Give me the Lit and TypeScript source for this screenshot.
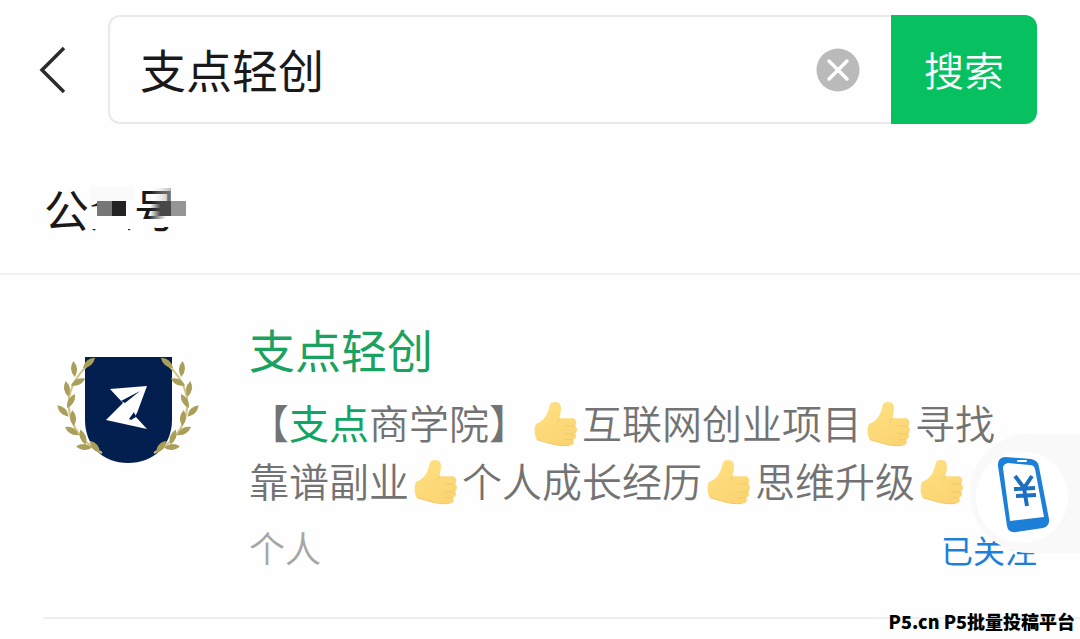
import { LitElement, html, css, svg } from "lit";
import { customElement, state } from "lit/decorators.js";

/* centre x, centre y, rotation */
const LEAVES = [
  [31, 8, -40], [16, 14, 85], [20, 27, -25], [9, 34, 80], [13, 46, -60], [5, 56, 45],
  [15, 63, 85], [14, 76, 30], [25, 82, 70], [26, 92, 5], [37, 92, 50],
];

@customElement("thumb-up")
export class ThumbUp extends LitElement {
  static styles = css`
    :host { display: inline-block; width: 43px; height: 46px; margin: 0 5px; vertical-align: -8px; }
    svg { display: block; width: 100%; height: 100%; }
  `;
  render() {
    return html`<svg viewBox="0 0 44 46" role="img" aria-label="👍">
      <defs>
        <linearGradient id="g" x1="0" y1="0" x2=".5" y2="1">
          <stop offset="0" stop-color="#ffe182" /><stop offset="1" stop-color="#fbd573" />
        </linearGradient>
      </defs>
      <path fill="url(#g)" d="M16 4C17 0 21 0 25 1C28 3 28 8 27 12L26 17H40C44 18 44 23 42 25C45 27 44 31 42 33C44 35 43 38 40 39C42 42 40 45 36 45C28 46 19 44 13 42L3 39C0 35 0 27 2 23C10 20 14 14 16 4Z" />
      <path fill="none" stroke="#f3c86c" stroke-width="1" stroke-linecap="round" d="M41 25H32M41 33H32M39 39H32M26 17L24 21" />
      <path fill="none" stroke="#f3c56a" stroke-width="1" d="M3 39L13 42C20 44 28 46 36 45" />
    </svg>`;
  }
}

@customElement("account-crest")
export class AccountCrest extends LitElement {
  static styles = css`
    :host { display: block; }
    svg { display: block; width: 140px; height: 110px; overflow: visible; }
  `;
  branch() {
    return svg`<path d="M34 6C22 17 14 27 11 43C9 61 17 84 44 98" fill="none" stroke="#d3c583" stroke-width="2" />
      ${LEAVES.map(([x, y, a]) => svg`<path
        transform="translate(${x} ${y}) rotate(${a})"
        d="M-8 0Q0 -6 8 0Q0 6 -8 0Z" fill="#a99f5b" />`)}`;
  }
  render() {
    return html`<svg viewBox="0 0 140 110" role="img" aria-label="支点轻创">
      <path d="M27 2H114V65C114 91 95 108 70 108S27 91 27 65Z" fill="#031f4f" />
      <g>${this.branch()}</g>
      <g transform="translate(140 0) scale(-1 1)">${this.branch()}</g>
      <path fill="#fff" d="M52 34L89 31L79 58L77 61L89 74L48 65L65 48Z" />
      <path fill="#031f4f" d="M63 46L82 36L67 48ZM71 64L76 57L78 62L73 65Z" />
    </svg>`;
  }
}

@customElement("app-root")
export class AppRoot extends LitElement {
  @state() query = "支点轻创";

  static styles = css`
    :host {
      display: block;
      position: relative;
      min-height: 100vh;
      overflow: hidden;
      background: #fefefe;
      color: #191919;
      font-family: "Noto Sans CJK SC", sans-serif;
      font-weight: 400;
    }
    * { box-sizing: border-box; }
    button, input { font: inherit; color: inherit; border: 0; padding: 0; margin: 0; background: none; }
    h2, h3, p { margin: 0; font-weight: inherit; }
    a { text-decoration: none; color: inherit; }
    .bar { display: flex; align-items: center; padding: 15px 43px 0 39px; }
    .back { width: 28px; margin-right: 41px; }
    .back svg, .clear svg { display: block; }
    .search {
      display: flex; flex: 1; min-width: 0; height: 109px; align-items: center;
      border: 2px solid #e9e9e9; border-right: 0; border-radius: 12px 0 0 12px;
      padding: 0 31px 0 30px;
    }
    .field { flex: 1; min-width: 0; height: 72px; padding-bottom: 4px; font-size: 46px; outline: 0; }
    .clear { flex: none; }
    .go {
      height: 109px; width: 146px; border-radius: 0 12px 12px 0; padding-bottom: 2px;
      background: #07c160; color: #fff; font-size: 40px; font-weight: 350;
    }
    .section {
      display: flex; padding: 53px 44px 32px; border-bottom: 2px solid #f1f1f1;
      font-size: 45px; line-height: 64px;
    }
    .masked { position: relative; }
    .mosaic { position: absolute; left: 44px; top: 10px; width: 106px; height: 52px; }
    .item { display: grid; grid-template-columns: 206px 1fr; margin-left: 43px; padding: 41px 43px 44px 0; border-bottom: 2px solid #efefef; }
    .crest { padding: 39px 0 0 15px; }
    .name { font-size: 46px; line-height: 64px; color: #1aa260; }
    .desc { font-size: 40px; line-height: 58px; margin-top: 13px; color: #737373; font-weight: 350; width: 756px; max-width: 100%; }
    .hit { color: #10a562; font-weight: 400; }
    .meta { display: flex; justify-content: space-between; align-items: center; margin-top: 12px; font-size: 36px; line-height: 52px; color: #a6a6a6; font-weight: 350; }
    .followed { font-size: 32px; color: #1d80d8; font-weight: 400; padding-top: 4px; line-height: 48px; }
    .float {
      position: absolute; right: 0; top: 434px; width: 110px; height: 119px;
      border-radius: 60px 0 0 60px; background: #f9f9f9;
    }
    .float svg { display: block; }
    .mark { position: absolute; right: 5px; top: 608px; font-size: 18px; line-height: 26px; font-weight: 900; color: #000; }
  `;

  render() {
    return html`
      <header class="bar">
        <button class="back" aria-label="返回">
          <svg width="28" height="50" viewBox="0 0 28 50"><path d="M25 3L3 25L25 47" fill="none" stroke="#2b2b2b" stroke-width="3.5" /></svg>
        </button>
        <div class="search">
          <input class="field" aria-label="搜索" .value=${this.query}
            @input=${(e: Event) => (this.query = (e.target as HTMLInputElement).value)} />
          <button class="clear" aria-label="清除" @click=${() => (this.query = "")}>
            <svg width="44" height="44" viewBox="0 0 44 44">
              <circle cx="22" cy="22" r="21.5" fill="#bababa" />
              <path d="M13 13L31 31M31 13L13 31" stroke="#fff" stroke-width="3.5" stroke-linecap="round" />
            </svg>
          </button>
        </div>
        <button class="go">搜索</button>
      </header>
      <main>
        <h2 class="section"><span class="masked">公众号
          <svg class="mosaic" viewBox="0 0 106 52" aria-hidden="true">
            <defs>
              <linearGradient id="fade"><stop offset="0" stop-color="#fff" stop-opacity="0" /><stop offset="1" stop-color="#999" stop-opacity=".7" /></linearGradient>
              <linearGradient id="dark"><stop offset="0" stop-color="#444" stop-opacity="0" /><stop offset=".5" stop-color="#484848" /></linearGradient>
              <linearGradient id="pale"><stop offset="0" stop-color="#fefefe" stop-opacity="0" /><stop offset=".5" stop-color="#fefefe" /></linearGradient>
            </defs>
            <path d="M2 0H46V14H12L2 16Z" fill="#fafafa" />
            <path d="M9 29H46V42H40V52H9V42H2V20L9 19Z" fill="#fefefe" />
            <path d="M9 14H24V29H9Z" fill="#777" /><path d="M24 14H38V29H24Z" fill="#222" />
            <path d="M38 14H46V42H38Z" fill="#fefefe" />
            <path d="M62 1H83V14H62Z" fill="url(#fade)" />
            <path d="M83 0H106V14H83Z" fill="#fefefe" />
            <path d="M62 14H83V29H62Z" fill="url(#dark)" />
            <path d="M83 14H98V29H83Z" fill="#959595" />
            <path d="M60 29H96V40H60Z" fill="url(#pale)" />
          </svg></span>
        </h2>
        <article class="item">
          <div class="crest"><account-crest></account-crest></div>
          <div>
            <h3 class="name"><a href="#">支点轻创</a></h3>
            <p class="desc">【<span class="hit">支点</span>商学院】<thumb-up></thumb-up>互联网创业项目<thumb-up></thumb-up>寻找靠谱副业<thumb-up></thumb-up>个人成长经历<thumb-up></thumb-up>思维升级<thumb-up></thumb-up></p>
            <div class="meta"><span>个人</span><span class="followed">已关注</span></div>
          </div>
        </article>
      </main>
      <button class="float" aria-label="收益">
        <svg width="110" height="119" viewBox="0 0 110 119">
          <circle cx="52" cy="63" r="46" fill="#fff" />
          <path fill="#1d80d8" d="M35 23L61 25Q68 26 69 33L79 85Q80 92 73 94L46 98Q38 99 37 92L28 32Q27 24 35 23Z" />
          <path fill="#fff" d="M38 29L60 31Q64 31 65 35L74 83L40 87L33 34Q33 30 38 29Z" />
          <path d="M48 27L56 27" stroke="#fff" stroke-width="2" stroke-linecap="round" />
          <path d="M45 42L54 54L62 42M44 55L65 54M46 62L66 61M54 54L57 72" fill="none" stroke="#1d6fc0" stroke-width="4" />
        </svg>
      </button>
      <div class="mark">P5.cn P5批量投稿平台</div>
    `;
  }
}
